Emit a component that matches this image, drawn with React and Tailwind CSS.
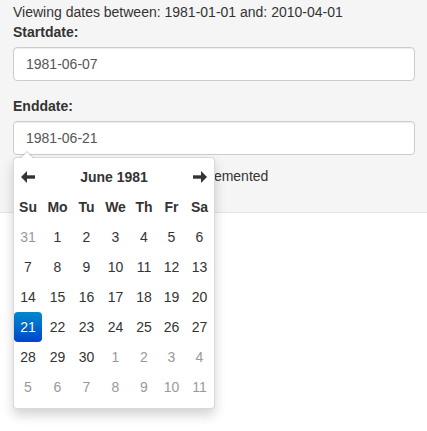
import React from "react";

const weeks = [
  [[31, "old"], [1], [2], [3], [4], [5], [6]],
  [[7], [8], [9], [10], [11], [12], [13]],
  [[14], [15], [16], [17], [18], [19], [20]],
  [[21, "sel"], [22], [23], [24], [25], [26], [27]],
  [[28], [29], [30], [1, "new"], [2, "new"], [3, "new"], [4, "new"]],
  [[5, "new"], [6, "new"], [7, "new"], [8, "new"], [9, "new"], [10, "new"], [11, "new"]],
];

const dow = ["Su", "Mo", "Tu", "We", "Th", "Fr", "Sa"];

function LeftArrow() {
  return (
    <svg width="14" height="12" viewBox="0 0 14 12" className="block">
      <polygon points="0,6 6,0 6,12" fill="#333" />
      <rect x="5.5" y="4.3" width="8.5" height="3.4" fill="#333" />
    </svg>
  );
}

function RightArrow() {
  return (
    <svg width="14" height="12" viewBox="0 0 14 12" className="block">
      <polygon points="14,6 8,0 8,12" fill="#333" />
      <rect x="0" y="4.3" width="8.5" height="3.4" fill="#333" />
    </svg>
  );
}

function DatePicker() {
  return (
    <div className="absolute left-0 top-[36px] z-10 w-[202px] rounded-[4px] border border-[rgba(0,0,0,0.15)] bg-white pt-[4px] pb-[6px] shadow-[0_6px_12px_rgba(0,0,0,0.175)]">
      <span className="absolute -top-[7px] left-[6px] h-0 w-0 border-x-[7px] border-b-[7px] border-x-transparent border-b-[rgba(0,0,0,0.2)]" />
      <span className="absolute -top-[6px] left-[7px] h-0 w-0 border-x-[6px] border-b-[6px] border-x-transparent border-b-white" />
      <div className="grid grid-cols-[28px_31px_27px_31px_26px_29px_27px]">
        <div className="flex h-[30px] items-center justify-center">
          <LeftArrow />
        </div>
        <div className="col-span-5 flex h-[30px] items-center justify-center font-bold">
          June 1981
        </div>
        <div className="flex h-[30px] items-center justify-center">
          <RightArrow />
        </div>
        {dow.map((d) => (
          <div key={d} className="flex h-[30px] items-center justify-center font-bold">
            {d}
          </div>
        ))}
        {weeks.map((w, wi) =>
          w.map(([n, kind], di) => (
            <div
              key={wi + "-" + di}
              className={
                kind === "sel"
                  ? "flex h-[30px] items-center justify-center rounded-[4px] bg-gradient-to-b from-[#0088cc] to-[#0044cc] text-white text-shadow-[0_-1px_0_rgba(0,0,0,0.25)]"
                  : kind
                  ? "flex h-[30px] items-center justify-center text-[#999]"
                  : "flex h-[30px] items-center justify-center"
              }
            >
              {n}
            </div>
          ))
        )}
      </div>
    </div>
  );
}

export default function App() {
  return (
    <div className="h-[431px] w-[427px] overflow-hidden bg-white font-['Liberation_Sans',Arial,sans-serif] text-[14px] leading-[20px] text-[#333]">
      <div className="h-[213px] border-b border-[#e3e3e3] bg-[#f5f5f5] px-[13px] pt-[2px]">
        <p>Viewing dates between: 1981-01-01 and: 2010-04-01</p>
        <div className="mb-[15px]">
          <label className="mb-[5px] block font-bold">Startdate:</label>
          <div className="h-[34px] w-[402px] rounded-[4px] border border-[#ccc] bg-white px-[12px] py-[6px] text-[#555] shadow-[inset_0_1px_1px_rgba(0,0,0,0.075)]">
            1981-06-07
          </div>
        </div>
        <div>
          <label className="mb-[5px] block font-bold">Enddate:</label>
          <div className="relative">
            <div className="h-[34px] w-[402px] rounded-[4px] border border-[#ccc] bg-white px-[12px] py-[6px] text-[#555] shadow-[inset_0_1px_1px_rgba(0,0,0,0.075)]">
              1981-06-21
            </div>
            <DatePicker />
          </div>
        </div>
        <p className="mt-[11px] whitespace-nowrap pl-[4px]">Info: date filtering is not yet implemented</p>
      </div>
    </div>
  );
}
